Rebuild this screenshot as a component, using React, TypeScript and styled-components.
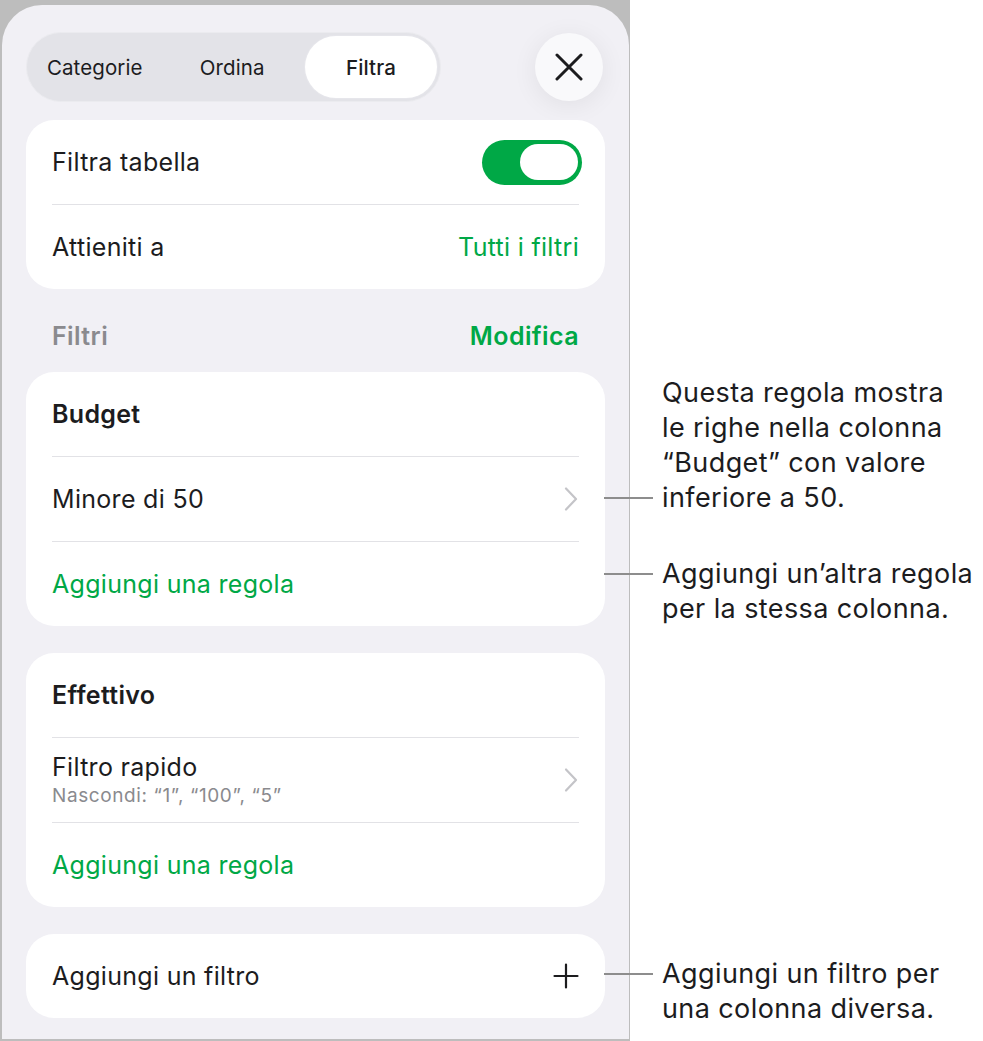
import React, { useState } from 'react';
import styled, { createGlobalStyle } from 'styled-components';

const GlobalStyle = createGlobalStyle`
  html, body {
    margin: 0;
    padding: 0;
    background: #ffffff;
  }
  body {
    font-family: Inter, 'Noto Sans', 'Liberation Sans', sans-serif;
    color: #1c1c1e;
    -webkit-font-smoothing: antialiased;
  }
`;

const green = '#00a846';

const SPage = styled.div`
  display: flex;
  align-items: flex-start;
  width: 983px;
  height: 1041px;
  overflow: hidden;
`;

const SFrame = styled.div`
  width: 630px;
  height: 1041px;
  box-sizing: border-box;
  padding: 5px 1px 2px 2px;
  background: #bdbdbd;
  flex-shrink: 0;
`;

const SPanel = styled.div`
  height: 100%;
  box-sizing: border-box;
  background: #f1f0f5;
  border-radius: 40px 40px 0 0;
  padding: 27px 24px 0 24px;
  display: flex;
  flex-direction: column;
`;

const SHeader = styled.div`
  display: flex;
  align-items: center;
  justify-content: space-between;
  margin-bottom: 18px;
`;

const SSegmented = styled.div`
  display: flex;
  align-items: center;
  width: 415px;
  height: 70px;
  box-sizing: border-box;
  padding: 3px;
  background: #e3e3e8;
  border: 1px solid #ebebef;
  border-radius: 35px;
`;

const SSegment = styled.button<{ $active?: boolean }>`
  height: 100%;
  flex: ${({ $active }) => ($active ? '0 0 132px' : '1 1 0')};
  border: none;
  border-radius: 32px;
  background: ${({ $active }) => ($active ? '#ffffff' : 'transparent')};
  box-shadow: ${({ $active }) => ($active ? '0 0 0 1px #e6e6eb' : 'none')};
  font-family: inherit;
  font-size: 20.5px;
  letter-spacing: 0.1px;
  font-weight: ${({ $active }) => ($active ? 500 : 400)};
  color: #1c1c1e;
  cursor: pointer;
  padding: ${({ $active }) => ($active ? '0' : '0 8px 0 0')};
`;

const SCloseBtn = styled.button`
  width: 68px;
  height: 68px;
  margin-right: 2px;
  border: none;
  border-radius: 50%;
  background: #f9f9fb;
  box-shadow: 0 4px 26px rgba(0, 0, 0, 0.07);
  display: flex;
  align-items: center;
  justify-content: center;
  padding: 0;
  cursor: pointer;
`;

const SCard = styled.div`
  background: #ffffff;
  border-radius: 28px;
  padding: 0 26px;
  display: flex;
  flex-direction: column;
`;

const SRow = styled.div`
  min-height: 84px;
  display: flex;
  align-items: center;
  justify-content: space-between;
  gap: 16px;
  & + & {
    border-top: 1px solid #e2e2e6;
  }
`;

const SLabel = styled.span<{ $bold?: boolean; $green?: boolean }>`
  font-size: 25px;
  letter-spacing: 0.3px;
  font-weight: ${({ $bold }) => ($bold ? 600 : 400)};
  color: ${({ $green }) => ($green ? green : '#1c1c1e')};
`;

const SStack = styled.div`
  display: flex;
  flex-direction: column;
  gap: 3px;
  line-height: 1.2;
`;

const SSubLabel = styled.span`
  font-size: 19px;
  letter-spacing: 0.6px;
  color: #8a8a8e;
`;

const SSectionHeader = styled.div`
  height: 26px;
  margin: 34px 0 23px;
  padding: 0 26px;
  display: flex;
  align-items: center;
  justify-content: space-between;
`;

const SSectionTitle = styled.span<{ $green?: boolean }>`
  font-size: 25px;
  letter-spacing: 0.4px;
  font-weight: 600;
  color: ${({ $green }) => ($green ? green : '#8a8a8e')};
`;

const SGap = styled.div`
  height: 27px;
  flex-shrink: 0;
`;

const SToggle = styled.button<{ $on: boolean }>`
  width: 100px;
  height: 45px;
  margin-right: -3px;
  border: none;
  border-radius: 23px;
  padding: 0 4px;
  background: ${({ $on }) => ($on ? green : '#e3e3e8')};
  display: flex;
  align-items: center;
  justify-content: ${({ $on }) => ($on ? 'flex-end' : 'flex-start')};
  cursor: pointer;
`;

const SKnob = styled.span`
  width: 58px;
  height: 36px;
  border-radius: 18px;
  background: #ffffff;
`;

const SNotes = styled.div`
  display: flex;
  flex-direction: column;
  padding-left: 32px;
`;

const SNote = styled.p<{ $top: number; $lineAt: number }>`
  position: relative;
  margin: ${({ $top }) => $top}px 0 0;
  font-size: 27px;
  letter-spacing: 0.4px;
  line-height: 35px;
  color: #1c1c1e;
  white-space: nowrap;

  &::before {
    content: '';
    position: absolute;
    left: -58px;
    width: 49px;
    height: 2px;
    top: ${({ $lineAt }) => $lineAt * 35 + 16.5}px;
    background: #8d8d8d;
  }
`;

const Chevron = () => (
  <svg width="16" height="26" viewBox="0 0 16 26" fill="none">
    <path d="M3 2.5 L13 13 L3 23.5" stroke="#c4c4c8" strokeWidth="2.2" strokeLinecap="round" strokeLinejoin="round" />
  </svg>
);

const CloseIcon = () => (
  <svg width="28" height="28" viewBox="0 0 28 28" fill="none">
    <path d="M2 2 L26 26 M26 2 L2 26" stroke="#1c1c1e" strokeWidth="3" strokeLinecap="round" />
  </svg>
);

const PlusIcon = () => (
  <svg width="26" height="26" viewBox="0 0 26 26" fill="none">
    <path d="M13 1.5 V24.5 M1.5 13 H24.5" stroke="#1c1c1e" strokeWidth="2.2" strokeLinecap="round" />
  </svg>
);

const tabs = ['Categorie', 'Ordina', 'Filtra'];

export default function App() {
  const [tab, setTab] = useState('Filtra');
  const [filterOn, setFilterOn] = useState(true);

  return (
    <>
      <GlobalStyle />
      <SPage>
        <SFrame>
          <SPanel>
            <SHeader>
              <SSegmented>
                {tabs.map((t) => (
                  <SSegment key={t} $active={tab === t} onClick={() => setTab(t)}>
                    {t}
                  </SSegment>
                ))}
              </SSegmented>
              <SCloseBtn aria-label="Chiudi">
                <CloseIcon />
              </SCloseBtn>
            </SHeader>

            <SCard>
              <SRow>
                <SLabel>Filtra tabella</SLabel>
                <SToggle $on={filterOn} onClick={() => setFilterOn(!filterOn)}>
                  <SKnob />
                </SToggle>
              </SRow>
              <SRow>
                <SLabel>Attieniti a</SLabel>
                <SLabel $green>Tutti i filtri</SLabel>
              </SRow>
            </SCard>

            <SSectionHeader>
              <SSectionTitle>Filtri</SSectionTitle>
              <SSectionTitle $green>Modifica</SSectionTitle>
            </SSectionHeader>

            <SCard>
              <SRow>
                <SLabel $bold>Budget</SLabel>
              </SRow>
              <SRow>
                <SLabel>Minore di 50</SLabel>
                <Chevron />
              </SRow>
              <SRow>
                <SLabel $green>Aggiungi una regola</SLabel>
              </SRow>
            </SCard>

            <SGap />

            <SCard>
              <SRow>
                <SLabel $bold>Effettivo</SLabel>
              </SRow>
              <SRow>
                <SStack>
                  <SLabel>Filtro rapido</SLabel>
                  <SSubLabel>Nascondi: “1”, “100”, “5”</SSubLabel>
                </SStack>
                <Chevron />
              </SRow>
              <SRow>
                <SLabel $green>Aggiungi una regola</SLabel>
              </SRow>
            </SCard>

            <SGap />

            <SCard>
              <SRow>
                <SLabel>Aggiungi un filtro</SLabel>
                <PlusIcon />
              </SRow>
            </SCard>
          </SPanel>
        </SFrame>

        <SNotes>
          <SNote $top={375} $lineAt={3}>
            Questa regola mostra
            <br />
            le righe nella colonna
            <br />
            “Budget” con valore
            <br />
            inferiore a 50.
          </SNote>
          <SNote $top={41} $lineAt={0}>
            Aggiungi un’altra regola
            <br />
            per la stessa colonna.
          </SNote>
          <SNote $top={330} $lineAt={0}>
            Aggiungi un filtro per
            <br />
            una colonna diversa.
          </SNote>
        </SNotes>
      </SPage>
    </>
  );
}
